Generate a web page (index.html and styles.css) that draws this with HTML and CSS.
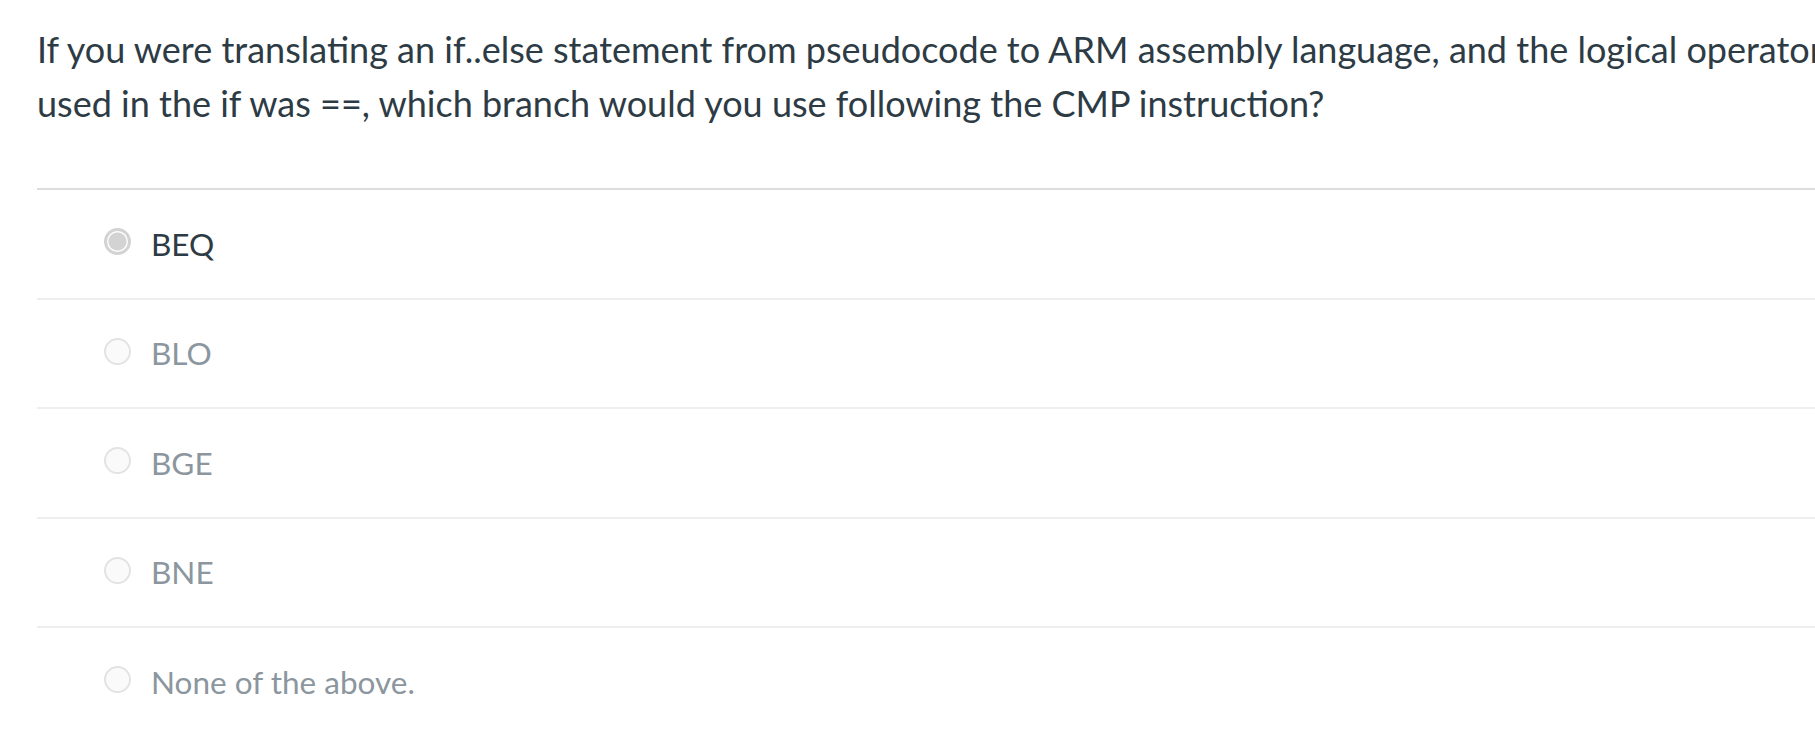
FILE: index.html
```html
<!DOCTYPE html>
<html lang="en">
<head>
<meta charset="utf-8">
<title>Quiz question</title>
<link rel="stylesheet" href="styles.css">
</head>
<body>
<div class="question">
  <div class="question-text">If you were translating an if..else statement from pseudocode to ARM assembly language, and the logical operator used in the if was ==, which branch would you use following the CMP instruction?</div>
  <div class="answers">
    <label class="answer selected"><span class="radio"></span><span class="answer-text">BEQ</span></label>
    <label class="answer"><span class="radio"></span><span class="answer-text">BLO</span></label>
    <label class="answer"><span class="radio"></span><span class="answer-text">BGE</span></label>
    <label class="answer"><span class="radio"></span><span class="answer-text">BNE</span></label>
    <label class="answer"><span class="radio"></span><span class="answer-text">None of the above.</span></label>
  </div>
</div>
</body>
</html>
```

FILE: styles.css
```css
html, body {
  margin: 0;
  padding: 0;
  background: #ffffff;
  overflow: hidden;
}
body {
  font-family: Lato, "Liberation Sans", sans-serif;
  color: #2d3b45;
}
.question {
  width: 1830px;
  padding: 22px 0 0 37px;
}
.question-text {
  font-size: 36px;
  line-height: 54px;
  margin-right: 20px;
}
.answers {
  margin-top: 58px;
  border-top: 2px solid #dddddd;
}
.answer {
  display: flex;
  align-items: center;
  height: 107.5px;
  border-bottom: 2px solid #eeeeee;
  box-sizing: content-box;
}
.radio {
  width: 23px;
  height: 23px;
  border-radius: 50%;
  border: 2px solid #e3e3e3;
  background: #fafafa;
  margin-left: 67px;
  margin-top: -4px;
  flex: none;
}
.answer-text {
  margin-left: 20px;
  font-size: 31.5px;
  color: #8b969e;
}
.answer.selected .radio {
  border: 3px solid #d3d3d3;
  width: 21px;
  height: 21px;
  background: radial-gradient(circle, #d3d3d3 0 8.5px, #ffffff 9.5px);
}
.answer.selected .answer-text {
  color: #2d3b45;
}
```
